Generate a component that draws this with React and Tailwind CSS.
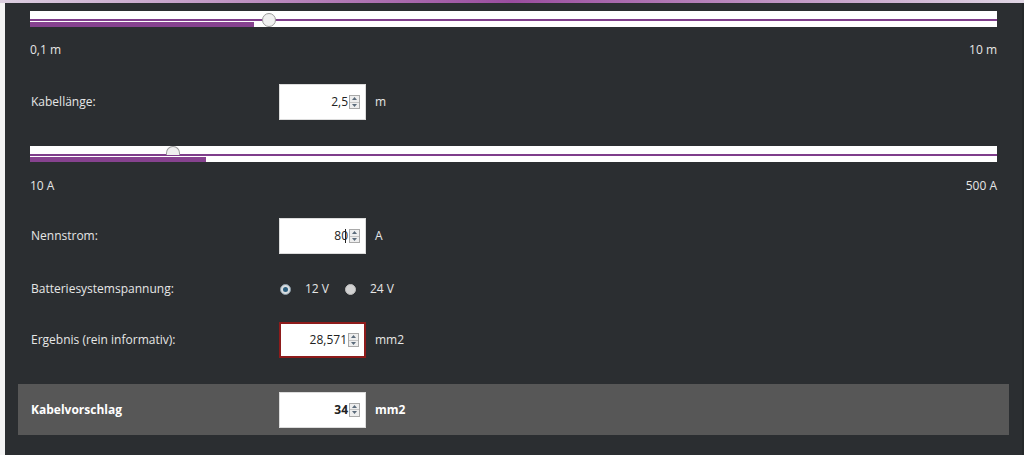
import React from 'react';

const Spinner = () => (
  <div className="flex flex-col w-[11px] h-[14px] border border-[#a9a9a9] bg-[#eeeeee] ml-[1px]">
    <div className="flex-1 flex items-center justify-center border-b border-[#c4c4c4]">
      <svg width="5" height="3" viewBox="0 0 5 3"><polygon points="0,3 5,3 2.5,0" fill="#5b6b7b" /></svg>
    </div>
    <div className="flex-1 flex items-center justify-center">
      <svg width="5" height="3" viewBox="0 0 5 3"><polygon points="0,0 5,0 2.5,3" fill="#5b6b7b" /></svg>
    </div>
  </div>
);

const NumberBox = ({ value, bold, invalid, caret }) => (
  <div
    className={`w-[87px] h-[36px] bg-white flex items-center justify-end pr-[5px] text-[12px] text-[#222] ${
      invalid ? 'border-2 border-[#8e1b1b]' : 'border border-[#dcdcdc]'
    } ${bold ? 'font-bold' : ''}`}
  >
    <span>{value}</span>
    {caret && <span className="w-px h-[14px] bg-[#222] -ml-[3px] mr-[2px]" />}
    <Spinner />
  </div>
);

const Slider = ({ fill, thumb, half }) => (
  <div className="relative h-[16px] bg-white">
    <div className="absolute left-0 right-0 top-[8px] h-[2px] bg-[#7f3d8b]" />
    <div className="absolute left-0 top-[11px] h-[5px] bg-[#86428f]" style={{ width: fill }} />
    {half ? (
      <div
        className="absolute top-[0px] w-[14px] h-[9px] rounded-t-full border border-b-0 border-[#9a9a9a] bg-[#efefef]"
        style={{ left: thumb }}
      />
    ) : (
      <div
        className="absolute top-[2px] w-[14px] h-[14px] rounded-full border border-[#9a9a9a] bg-[#f0f0f0]"
        style={{ left: thumb }}
      />
    )}
  </div>
);

const Row = ({ label, children, unit, className = '' }) => (
  <div className={`flex items-center ${className}`}>
    <div className="w-[249px] pl-px">{label}</div>
    {children}
    <div className="ml-[9px]">{unit}</div>
  </div>
);

const Radio = ({ checked }) =>
  checked ? (
    <span className="w-[11px] h-[11px] rounded-full bg-[#d9dde0] border border-[#8a9aa6] flex items-center justify-center">
      <span className="block w-[5px] h-[5px] rounded-full bg-[#2c5e7e]" />
    </span>
  ) : (
    <span className="block w-[11px] h-[11px] rounded-full bg-[#d2d2d2] border border-[#bcbcbc]" />
  );

export default function App() {
  return (
    <div
      className="w-[1024px] h-[455px] overflow-hidden bg-white flex flex-col text-[12px] text-[#e6e6e6]"
      style={{ fontFamily: '"Open Sans", "Liberation Sans", sans-serif' }}
    >
      <div className="h-[3px] bg-gradient-to-r from-[#dccfe0] via-[#9a4d9f] to-[#e0d6e4]" />
      <div className="flex flex-1">
        <div className="w-[5px] bg-[#f4f4f4]" />
        <div className="flex-1 bg-[#2b2e31] flex flex-col px-[13px]">
          <div className="px-[12px] mt-[8px]">
            <Slider fill={224} thumb={232} />
            <div className="flex justify-between h-[18px] items-center mt-[14px]">
              <span>0,1 m</span>
              <span>10 m</span>
            </div>
            <Row label="Kabellänge:" unit="m" className="mt-[25px]">
              <NumberBox value="2,5" />
            </Row>
            <div className="mt-[26px]">
              <Slider fill={176} thumb={136} half />
            </div>
            <div className="flex justify-between h-[18px] items-center mt-[15px]">
              <span>10 A</span>
              <span>500 A</span>
            </div>
            <Row label="Nennstrom:" unit="A" className="mt-[23px]">
              <NumberBox value="80" caret />
            </Row>
            <div className="flex items-center h-[36px] mt-[17px]">
              <div className="w-[249px] pl-px">Batteriesystemspannung:</div>
              <div className="flex items-center pl-[1px]">
                <Radio checked />
                <span className="ml-[14px]">12 V</span>
                <span className="ml-[16px]"><Radio /></span>
                <span className="ml-[14px]">24 V</span>
              </div>
            </div>
            <Row label="Ergebnis (rein informativ):" unit="mm2" className="mt-[15px]">
              <NumberBox value="28,571" invalid />
            </Row>
          </div>
          <div className="mt-[26px] h-[51px] bg-[#575757] px-[12px] flex items-center font-bold text-white">
            <Row label="Kabelvorschlag" unit="mm2">
              <NumberBox value="34" bold />
            </Row>
          </div>
        </div>
        <div className="w-[2px] bg-[#25282a]" />
      </div>
    </div>
  );
}
